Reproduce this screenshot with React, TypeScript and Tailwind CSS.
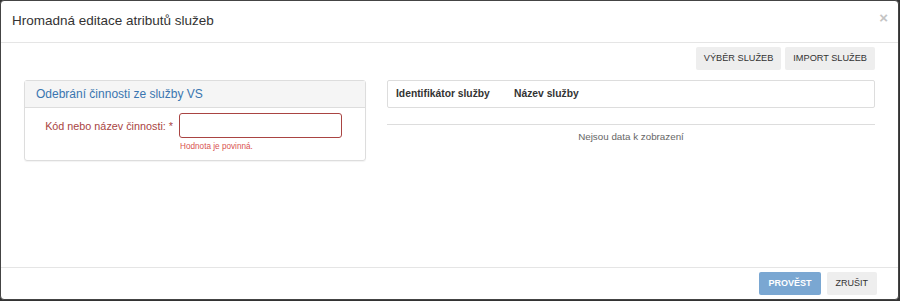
import React from 'react';

const font = { fontFamily: '"Liberation Sans", Arial, sans-serif' };

function GrayButton({ label }: { label: string }) {
  return (
    <button className="h-[23px] rounded-[2px] bg-[#eeeeee] px-[8px] text-[9.2px] uppercase text-[#333]">
      {label}
    </button>
  );
}

function RemovePanel() {
  return (
    <div className="w-[342px] rounded-[3px] border border-[#dddddd] shadow-[0_1px_1px_rgba(0,0,0,0.05)]">
      <div className="flex h-[27px] items-center border-b border-[#dddddd] bg-[#f5f5f5] px-[11px] text-[12px] text-[#3a75b0]">
        Odebrání činnosti ze služby VS
      </div>
      <div className="flex items-start pb-[7px] pt-[5px]">
        <label className="w-[149px] pr-[1px] pt-[5px] text-right text-[10.8px] text-[#a94442]">
          Kód nebo název činnosti: *
        </label>
        <div className="ml-[5px] flex flex-col">
          <input className="h-[25px] w-[163px] rounded-[3px] border border-[#a94442] outline-none" />
          <span className="mt-[3px] pl-[1px] text-[8.2px] text-[#d9534f]">Hodnota je povinná.</span>
        </div>
      </div>
    </div>
  );
}

function ServicesTable() {
  return (
    <div className="flex w-[488px] flex-col">
      <div className="flex h-[28px] items-center rounded-[2px] border border-[#dddddd] px-[8px] text-[10.3px] font-bold text-[#333]">
        <span className="w-[118px]">Identifikátor služby</span>
        <span>Název služby</span>
      </div>
      <div className="mt-[16px] border-t border-[#dddddd] pt-[5px] text-center text-[9.8px] text-[#666]">
        Nejsou data k zobrazení
      </div>
    </div>
  );
}

export default function App() {
  return (
    <div className="h-[301px] w-[900px] bg-[#333]" style={font}>
      <div className="flex h-[300px] w-[899px] flex-col rounded-[4px] border border-[#444] bg-white">
        <div className="flex h-[42px] items-center justify-between border-b border-[#e5e5e5] pl-[11px] pr-[10px]">
          <h4 className="text-[13.5px] text-[#333]">Hromadná editace atributů služeb</h4>
          <span className="-mt-[8px] text-[15px] font-bold leading-none text-[#c4c4c4]">×</span>
        </div>
        <div className="flex flex-1 flex-col px-[23px] pt-[4px]">
          <div className="flex justify-end gap-[4px]">
            <GrayButton label="Výběr služeb" />
            <GrayButton label="Import služeb" />
          </div>
          <div className="mt-[10px] flex justify-between">
            <RemovePanel />
            <ServicesTable />
          </div>
        </div>
        <div className="flex h-[32px] items-center justify-end gap-[6px] border-t border-[#e5e5e5] pr-[21px]">
          <button className="h-[23px] rounded-[2px] bg-[#7aa7d2] px-[9px] text-[9px] font-bold text-white">
            PROVĚST
          </button>
          <button className="h-[23px] rounded-[2px] bg-[#eeeeee] px-[9px] text-[9px] text-[#333]">
            ZRUŠIT
          </button>
        </div>
      </div>
    </div>
  );
}
